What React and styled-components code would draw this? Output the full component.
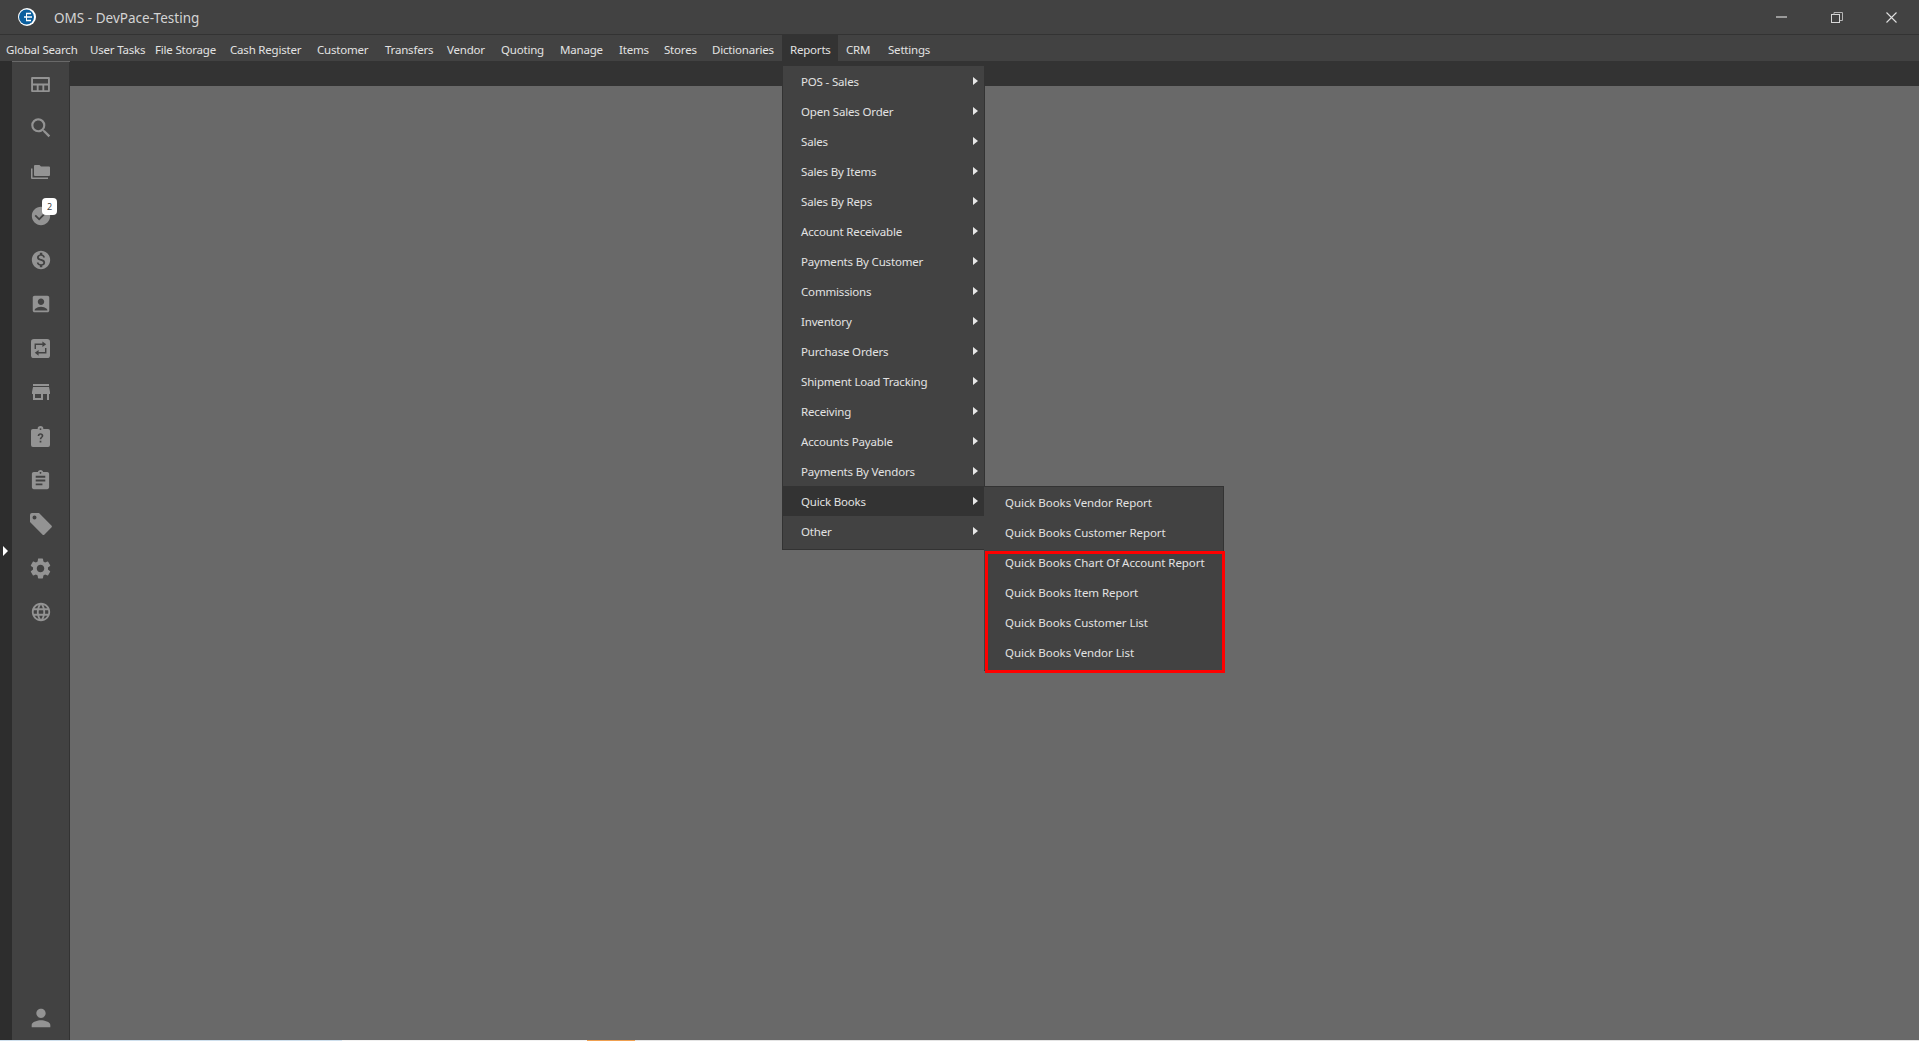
import React from 'react';
import styled, { createGlobalStyle } from 'styled-components';
import {
  MdSearch, MdCheckCircle, MdMonetizationOn, MdAccountBox, MdStore,
  MdAssignment, MdSettings, MdLanguage, MdPerson,
} from 'react-icons/md';

const iconGrey = '#939393';

const GlobalStyle = createGlobalStyle`
  html, body { margin: 0; padding: 0; height: 100%; overflow: hidden; background: #696969; }
  body { font-family: "Noto Sans", "Open Sans", sans-serif; }
`;

const Shell = styled.div`
  width: 1919px;
  height: 1041px;
  display: flex;
  flex-direction: column;
  overflow: hidden;
`;

const TitleBar = styled.div`
  height: 35px;
  box-sizing: border-box;
  flex: none;
  display: flex;
  align-items: center;
  background: #424242;
  border-bottom: 1px solid #333;
  color: #d4d4d4;
`;

const Logo = styled.svg`
  width: 18px;
  height: 18px;
  margin-left: 18px;
`;

const AppTitle = styled.span`
  margin-left: 18px;
  padding-top: 1px;
  font-size: 13.5px;
  letter-spacing: 0.02px;
  flex: 1;
`;

const WinButton = styled.button`
  width: 55px;
  height: 34px;
  padding: 0;
  border: 0;
  background: none;
  display: flex;
  align-items: center;
  justify-content: center;
`;

const MenuBar = styled.nav`
  height: 26px;
  flex: none;
  display: flex;
  background: #424242;
`;

const MenuItem = styled.div`
  position: relative;
  width: ${p => p.$width}px;
  height: 26px;
  box-sizing: border-box;
  padding: 3px 0 0 ${p => p.$pad}px;
  display: flex;
  align-items: center;
  font-size: 11.5px;
  letter-spacing: -0.2px;
  white-space: nowrap;
  color: #e2e2e2;
  background: ${p => (p.$open ? '#333' : 'transparent')};
`;

const Dropdown = styled.div`
  position: absolute;
  left: 0;
  top: 31px;
  width: 201px;
  background: #424242;
  border: 1px solid #333;
  border-top: 0;
  padding-bottom: 3px;
  z-index: 5;
`;

const DropRow = styled.div`
  position: relative;
  height: 30px;
  display: flex;
  align-items: center;
  justify-content: space-between;
  padding: 0 6px 0 18px;
  font-size: 11.5px;
  letter-spacing: -0.17px;
  color: #e2e2e2;
  background: ${p => (p.$open ? '#333' : 'transparent')};
`;

const Caret = styled.i`
  width: 0;
  height: 0;
  border-left: 5px solid #e8e8e8;
  border-top: 4px solid transparent;
  border-bottom: 4px solid transparent;
`;

const SubMenu = styled.div`
  position: absolute;
  left: 201px;
  top: 0;
  width: 239px;
  background: #424242;
  border: 1px solid #333;
  border-left: 0;
  padding-bottom: 3px;
`;

const SubRow = styled.div`
  height: 30px;
  padding-left: 21px;
  box-sizing: border-box;
  display: flex;
  align-items: center;
  font-size: 11.5px;
  letter-spacing: -0.06px;
  color: #e2e2e2;
`;

const RedBox = styled.div`
  position: absolute;
  left: 1px;
  top: 64px;
  width: 240px;
  height: 122px;
  box-sizing: border-box;
  border: 3px solid #f00;
  pointer-events: none;
`;

const Body = styled.div`
  flex: 1;
  display: flex;
  min-height: 0;
`;

const Rail = styled.div`
  width: 12px;
  flex: none;
  background: #2d2d2d;
  display: flex;
  align-items: center;
`;

const RailArrow = styled.i`
  width: 0;
  height: 0;
  margin-left: 3px;
  border-left: 5px solid #fff;
  border-top: 5px solid transparent;
  border-bottom: 5px solid transparent;
`;

const Sidebar = styled.aside`
  width: 58px;
  flex: none;
  margin-top: 1px;
  box-sizing: border-box;
  background: #424242;
  border-right: 1px solid #333;
  display: flex;
  flex-direction: column;
  align-items: center;
`;

const SideSlot = styled.div`
  position: relative;
  width: 100%;
  height: 44px;
  flex: none;
  display: flex;
  align-items: center;
  justify-content: center;
  color: ${iconGrey};
`;

const Spacer = styled.div`
  flex: 1;
`;

const Badge = styled.span`
  position: absolute;
  left: 30px;
  top: 4px;
  width: 15px;
  height: 17px;
  border-radius: 4px;
  background: #fff;
  color: #444;
  font-size: 9px;
  display: flex;
  align-items: center;
  justify-content: center;
`;

const Main = styled.main`
  flex: 1;
  display: flex;
  flex-direction: column;
`;

const Strip = styled.div`
  height: 25px;
  flex: none;
  background: #333;
`;

const Content = styled.div`
  flex: 1;
  background: #696969;
`;

const TaskbarEdge = styled.div`
  height: 1px;
  flex: none;
  background: linear-gradient(90deg, #cfe0ee 0 342px, #f2f2f2 342px 587px, #f0a050 587px 635px, #e4e4e4 635px);
`;

const topMenu = [
  { label: 'Global Search', width: 84, pad: 6 },
  { label: 'User Tasks', width: 65, pad: 6 },
  { label: 'File Storage', width: 73, pad: 6 },
  { label: 'Cash Register', width: 87, pad: 8 },
  { label: 'Customer', width: 68, pad: 8 },
  { label: 'Transfers', width: 62, pad: 8 },
  { label: 'Vendor', width: 54, pad: 8 },
  { label: 'Quoting', width: 59, pad: 8 },
  { label: 'Manage', width: 59, pad: 8 },
  { label: 'Items', width: 45, pad: 8 },
  { label: 'Stores', width: 48, pad: 8 },
  { label: 'Dictionaries', width: 78, pad: 8 },
];

const reports = [
  'POS - Sales', 'Open Sales Order', 'Sales', 'Sales By Items', 'Sales By Reps', 'Account Receivable',
  'Payments By Customer', 'Commissions', 'Inventory', 'Purchase Orders', 'Shipment Load Tracking', 'Receiving',
  'Accounts Payable', 'Payments By Vendors', 'Quick Books', 'Other',
];

const quickBooks = [
  'Quick Books Vendor Report', 'Quick Books Customer Report', 'Quick Books Chart Of Account Report',
  'Quick Books Item Report', 'Quick Books Customer List', 'Quick Books Vendor List',
];

const LayoutIcon = () => (
  <svg width="19" height="15" viewBox="0 0 20 16" fill={iconGrey}>
    <path fillRule="evenodd" d="M1 0h18a1 1 0 0 1 1 1v14a1 1 0 0 1-1 1H1a1 1 0 0 1-1-1V1a1 1 0 0 1 1-1zm1 2v5h16V2zm0 7v5h4V9zm6 0v5h4V9zm6 0v5h4V9z" />
  </svg>
);

const FoldersIcon = () => (
  <svg width="19" height="14" viewBox="0 0 19 14" fill={iconGrey}>
    <path d="M4 0h4.500l1.500 1.500h8a1 1 0 0 1 1 1V10a1 1 0 0 1-1 1H4a1 1 0 0 1-1-1V1a1 1 0 0 1 1-1z" />
    <path d="M0 3.500h1.500V12.500H17V14H1a1 1 0 0 1-1-1z" />
  </svg>
);

const SwapIcon = () => (
  <svg width="19" height="19" viewBox="0 0 20 20">
    <rect width="20" height="20" rx="3" fill={iconGrey} />
    <path d="M4.500 10.500V5.500h8M15.500 9.500v5h-8" fill="none" stroke="#424242" strokeWidth="1.500" />
    <path d="M12 2.500l4 3-4 3zM8 11.500l-4 3 4 3z" fill="#424242" />
  </svg>
);

const QuestionClipIcon = () => (
  <svg width="19" height="21" viewBox="0 0 20 22" fill={iconGrey}>
    <path fillRule="evenodd" d="M2 3h5a3 3 0 0 1 6 0h5a2 2 0 0 1 2 2v15a2 2 0 0 1-2 2H2a2 2 0 0 1-2-2V5a2 2 0 0 1 2-2zm8-.8a1 1 0 1 0 0 2 1 1 0 0 0 0-2zM7 10.500h1.800c0-.8.500-1.300 1.200-1.300s1.200.5 1.200 1.200c0 1.300-2.100 1.300-2.100 3.600h1.800c0-1.700 2.100-1.800 2.100-3.700C13 8.800 11.700 7.600 10 7.600s-3 1.300-3 2.900zM9.100 15.500v1.800h1.800v-1.800z" />
  </svg>
);

const TagIcon = () => (
  <svg width="22" height="22" viewBox="0 0 22 22" fill={iconGrey}>
    <path fillRule="evenodd" d="M2 0h7l12.400 12.400a1.500 1.500 0 0 1 0 2.100l-6.900 6.900a1.500 1.500 0 0 1-2.100 0L0 9V2a2 2 0 0 1 2-2zm2.500 2.500a2 2 0 1 0 0 4 2 2 0 0 0 0-4z" />
  </svg>
);

const sideIcons = [
  <LayoutIcon />, <MdSearch size={26} />, <FoldersIcon />, <MdCheckCircle size={22} />,
  <MdMonetizationOn size={22} />, <MdAccountBox size={22} />, <SwapIcon />, <MdStore size={24} />,
  <QuestionClipIcon />, <MdAssignment size={23} />, <TagIcon />, <MdSettings size={25} />, <MdLanguage size={22} />,
];

export default function App() {
  return (
    <Shell>
      <GlobalStyle />
      <TitleBar>
        <Logo viewBox="0 0 18 18">
          <circle cx="9" cy="9" r="9" fill="#fff" />
          <circle cx="8.500" cy="9" r="7.500" fill="#0b5f9e" />
          <path d="M8 5.500h5M6 9h8M8 12.500h5" stroke="#fff" strokeWidth="1.600" />
          <path d="M8.500 5v8" stroke="#fff" strokeWidth="1" />
        </Logo>
        <AppTitle>OMS - DevPace-Testing</AppTitle>
        <WinButton>
          <svg width="11" height="2"><rect width="11" height="2" fill="#9a9a9a" /></svg>
        </WinButton>
        <WinButton>
          <svg width="12" height="11" viewBox="0 0 12 11" fill="none" stroke="#d8d8d8">
            <rect x="0.500" y="2.500" width="8" height="8" />
            <path d="M3 2.500V.5h8.500v8H9" stroke="#b5b5b5" />
          </svg>
        </WinButton>
        <WinButton>
          <svg width="11" height="11" viewBox="0 0 11 11" stroke="#e0e0e0" strokeWidth="1.100"><path d="M.5.5l10 10M10.500.5l-10 10" /></svg>
        </WinButton>
      </TitleBar>
      <MenuBar>
        {topMenu.map(m => <MenuItem key={m.label} $width={m.width} $pad={m.pad}>{m.label}</MenuItem>)}
        <MenuItem $open $width={56} $pad={8}>
          Reports
          <Dropdown>
            {reports.map(r => (
              <DropRow key={r} $open={r === 'Quick Books'}>
                {r}
                <Caret />
                {r === 'Quick Books' && (
                  <SubMenu>
                    {quickBooks.map(q => <SubRow key={q}>{q}</SubRow>)}
                    <RedBox />
                  </SubMenu>
                )}
              </DropRow>
            ))}
          </Dropdown>
        </MenuItem>
        <MenuItem $width={42} $pad={8}>CRM</MenuItem>
        <MenuItem $width={60} $pad={8}>Settings</MenuItem>
      </MenuBar>
      <Body>
        <Rail><RailArrow /></Rail>
        <Sidebar>
          {sideIcons.map((icon, i) => (
            <SideSlot key={i}>
              {icon}
              {i === 3 && <Badge>2</Badge>}
            </SideSlot>
          ))}
          <Spacer />
          <SideSlot><MdPerson size={28} /></SideSlot>
        </Sidebar>
        <Main>
          <Strip />
          <Content />
        </Main>
      </Body>
      <TaskbarEdge />
    </Shell>
  );
}
